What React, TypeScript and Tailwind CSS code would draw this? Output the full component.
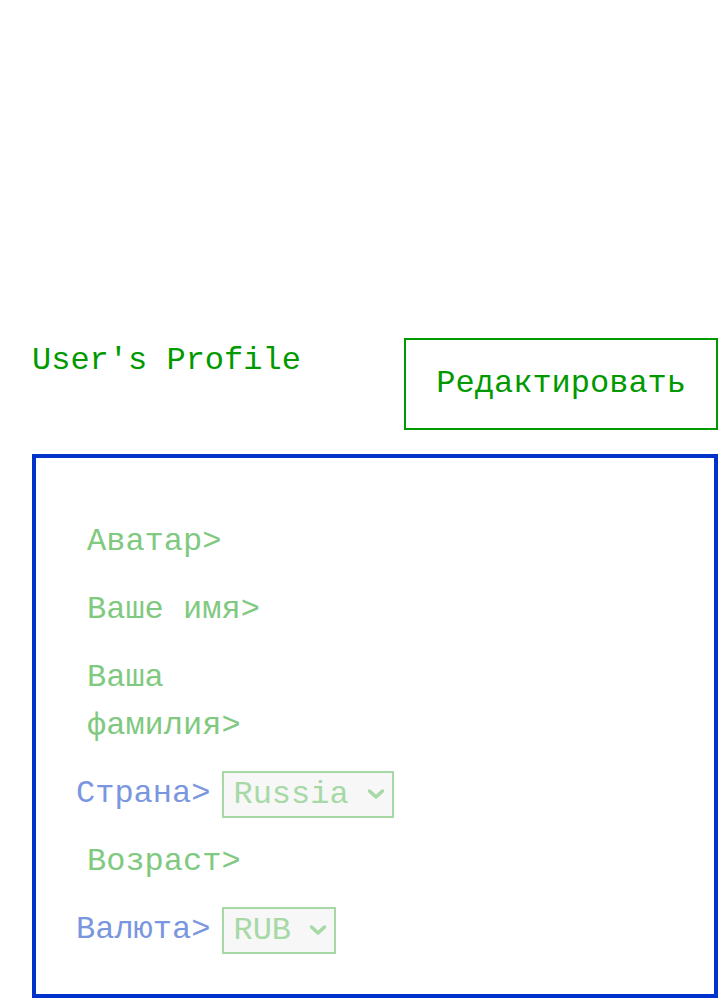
const mono = "font-['Liberation_Mono',monospace]";

function Chevron() {
  return (
    <svg width="18" height="12" viewBox="0 0 18 12" className="ml-auto shrink-0">
      <path d="M2.5 3 L9 9 L15.5 3" fill="none" stroke="#a6d9a6" strokeWidth="3.5" strokeLinecap="round" strokeLinejoin="round" />
    </svg>
  );
}

function FakeSelect({ value, width }: { value: string; width: string }) {
  return (
    <div className={`flex items-center h-[47px] border-2 border-[#a6d9a6] bg-[#f7f7f7] pl-[9px] pr-[7px] ${width}`}>
      <span className="text-[#a6d9a6] leading-[43px]">{value}</span>
      <Chevron />
    </div>
  );
}

export default function App() {
  return (
    <div className={`min-h-[998px] bg-white pt-[336px] pl-8 text-[32px] leading-[48px] ${mono}`}>
      <div className="flex items-start justify-between">
        <h1 className="text-[#009a00] mt-[1px]">User's Profile</h1>
        <button className="border-2 border-[#009a00] text-[#009a00] px-[30px] py-[20px] mt-[2px] leading-[48px]">
          Редактировать
        </button>
      </div>
      <div className="mt-[24px] border-4 border-[#0033cc] h-[544px] pt-[60px] pl-[40px] flex flex-col gap-5">
        <div className="pl-[11px] text-[#80c980]">Аватар&gt;</div>
        <div className="pl-[11px] text-[#80c980]">Ваше имя&gt;</div>
        <div className="pl-[11px] text-[#80c980] w-[220px]">Ваша фамилия&gt;</div>
        <div className="flex items-center gap-[12px] h-[48px]">
          <span className="text-[#7b96e0]">Страна&gt;</span>
          <FakeSelect value="Russia" width="w-[172px]" />
        </div>
        <div className="pl-[11px] text-[#80c980]">Возраст&gt;</div>
        <div className="flex items-center gap-[12px] h-[48px]">
          <span className="text-[#7b96e0]">Валюта&gt;</span>
          <FakeSelect value="RUB" width="w-[114px]" />
        </div>
      </div>
    </div>
  );
}
